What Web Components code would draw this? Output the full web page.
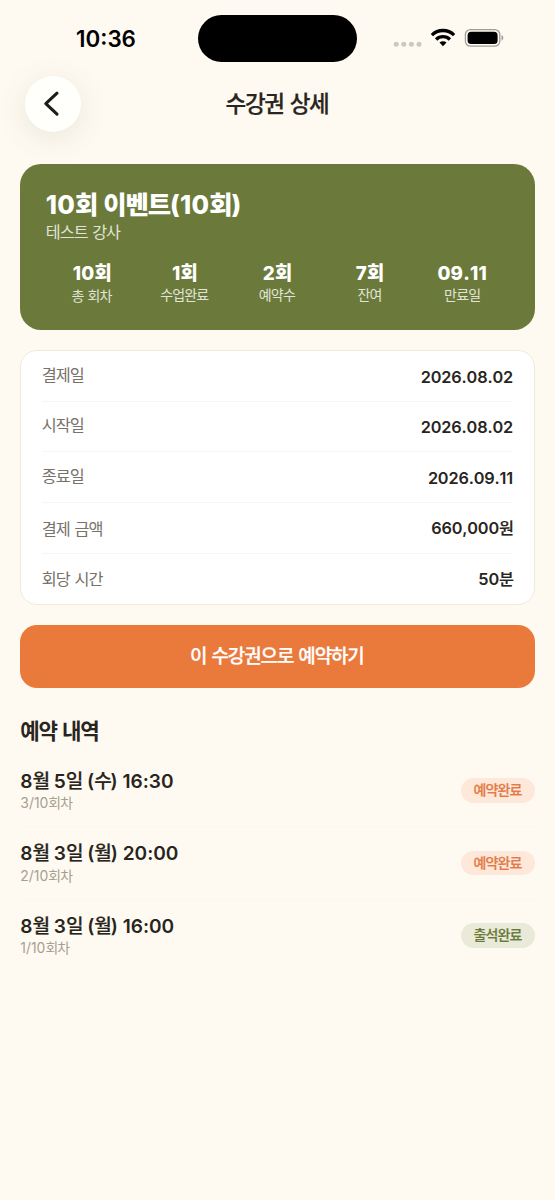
<!DOCTYPE html>
<html lang="ko">
<head>
<meta charset="utf-8">
<title>수강권 상세</title>
<style>
html,body{margin:0;background:#fffaf1}
body{width:555px;height:1200px;overflow:hidden;font-family:Inter,"Noto Sans CJK KR",sans-serif;color:#282520}
</style>
</head>
<body>
<pass-screen></pass-screen>
<script>
// Hangul runs are set slightly tighter than digits and punctuation.
const ko = s => s.replace(/[가-힣]+/g, m => `<span class="h">${m}</span>`);
const BASE = `:host{display:block;box-sizing:border-box}*{box-sizing:border-box}.h{letter-spacing:-.06em}`;
const define = (name, css, html) => customElements.define(name, class extends HTMLElement {
  constructor() { super(); this.attachShadow({mode: 'open'}); }
  connectedCallback() {
    const t = document.createElement('template');
    t.innerHTML = `<style>${BASE}${css}</style>` + html(k => this.getAttribute(k) || '');
    this.shadowRoot.replaceChildren(t.content.cloneNode(true));
  }
});

define('status-bar', `
:host{display:grid;grid-template-columns:198px 159px 1fr;height:75.5px;color:#000}
.time{padding:24px 0 0 76px;font-size:22.4px;line-height:30px;font-weight:600;white-space:nowrap}
.island{margin-top:15px;height:46.5px;border-radius:24px;background:#000}
.icons{display:flex;padding:27px 0 0 36px}
svg{display:block}`,
() => `<div class="time">10:36</div><div class="island"></div>
<div class="icons"><svg width="114" height="24" viewBox="0 0 114 24">
<g fill="#cbc8c0"><circle cx="3.2" cy="17.3" r="2.5"/><circle cx="10.8" cy="17.3" r="2.5"/><circle cx="18.4" cy="17.3" r="2.5"/><circle cx="26" cy="17.3" r="2.5"/></g>
<g fill="none" stroke="#000" stroke-width="3.3"><path d="M38.9 8.1a15.7 15.7 0 0 1 22.2 0"/><path d="M43.1 12.5a9.8 9.8 0 0 1 13.8 0"/></g>
<path d="M46.5 15.6a5.1 5.1 0 0 1 7 0L50 19.2z" fill="#000"/>
<rect x="72.4" y="2.6" width="34.4" height="16.6" rx="5" fill="none" stroke="#a09d97" stroke-width="1.3"/>
<rect x="74.6" y="4.8" width="30" height="12.3" rx="3.6" fill="#000"/>
<path d="M108.5 8.1c2.4 1 2.4 4.6 0 5.6z" fill="#a09d97"/></svg></div>`);

define('nav-header', `
:host{display:grid;grid-template-columns:56px 1fr 56px;align-items:center;padding:0 25.5px 0 24.5px;height:56px}
.back{width:56px;height:56px;border-radius:50%;background:#fffffc;box-shadow:0 6px 30px rgba(90,90,70,.12);display:grid;place-items:center}
h1{margin:0;text-align:center;font-size:22.5px;line-height:30px;font-weight:500;-webkit-text-stroke:.25px currentColor}`,
g => `<div class="back"><svg width="56" height="56" viewBox="0 0 56 56"><path d="M32 17.2 20.8 27.7 32 38.2" fill="none" stroke="#1d1c1a" stroke-width="3.1" stroke-linecap="round" stroke-linejoin="round"/></svg></div><h1>${ko(g('title'))}</h1>`);

define('pass-stat', `
:host{text-align:center;color:#fff;white-space:nowrap;position:relative;left:-.5px}
b{display:block;font-size:18.8px;line-height:24px;font-weight:800;font-kerning:none;letter-spacing:.01em}
i{display:block;font-style:normal;font-size:14px;line-height:20px;margin-top:-1px;color:#e1e4d8;padding-top:var(--label-top,0)}`,
g => `<b>${ko(g('value'))}</b><i>${ko(g('label'))}</i>`);

define('pass-card', `
:host{height:166px;border-radius:21px;background:#6b7a3a;padding:25px 25.5px 0;color:#fff}
h2{margin:0;font-size:25.4px;line-height:32px;font-weight:800;letter-spacing:.01em}
h2 .h{letter-spacing:-.043em}
p{margin:0;font-size:16.2px;line-height:23px;color:#e1e4d8}
.stats{display:grid;grid-template-columns:repeat(5,1fr);margin-top:18.2px}`,
g => `<h2>${ko(g('name'))}</h2><p>${ko(g('teacher'))}</p><div class="stats"><slot></slot></div>`);

define('info-card', `
:host{height:254.5px;border:1.5px solid #ecebdc;border-radius:17px;background:#fff;padding:0 20.5px}`,
() => `<slot></slot>`);

define('info-row', `
:host{display:flex;justify-content:space-between;height:50.6px;border-bottom:1px solid #f6f6f3;font-size:16.3px;line-height:24px}
:host(:last-child){border:0}
.l{color:#77726a;padding-top:var(--label-top,12px)}
.v{font-weight:600;padding-top:13.4px;font-kerning:none;letter-spacing:-.01em}
.v .h{font-weight:500;-webkit-text-stroke:.2px currentColor}`,
g => `<span class="l">${ko(g('label'))}</span><span class="v">${ko(g('value'))}</span>`);

define('primary-button', `
:host{height:63px}
button{display:block;width:100%;height:63px;border:0;border-radius:17px;background:#ea7a3c;color:#fff;font:500 19px/28px Inter,"Noto Sans CJK KR",sans-serif;-webkit-text-stroke:.25px currentColor;padding:1.5px 1px 0 0}`,
g => `<button>${ko(g('label'))}</button>`);

define('status-badge', `
:host{width:74px;height:24.5px;border-radius:13px;text-align:center;font-size:14px;line-height:24px;font-weight:500;-webkit-text-stroke:.2px currentColor;color:#e37a45;background:#fde8da}
:host([kind=done]){color:#6b7a3a;background:#e9ead8}`,
g => ko(g('label')));

define('booking-row', `
:host{display:flex;align-items:center;justify-content:space-between;height:72.67px;border-bottom:1px solid #fcf7ec}
:host(:last-child){border-color:transparent}
.d{font-size:19.1px;line-height:25px;font-weight:600;position:relative;top:1px}
.d .h{font-weight:500;-webkit-text-stroke:.2px currentColor}
.s{font-size:13.9px;line-height:20px;color:#a5a092;padding-top:.2px}`,
g => `<div><div class="d">${ko(g('date'))}</div><div class="s">${ko(g('count'))}</div></div><slot></slot>`);

define('pass-screen', `
:host{height:1200px}
main{display:flex;flex-direction:column;padding:32.5px 20.5px 0 20.3px}
info-card{margin-top:20.3px}
primary-button{margin-top:20px}
h3{margin:29px 0 9.8px;font-size:21.2px;line-height:28px;font-weight:600}`,
() => `<status-bar></status-bar><nav-header title="수강권 상세"></nav-header>
<main>
<pass-card name="10회 이벤트(10회)" teacher="테스트 강사">
<pass-stat style="--label-top:1px" value="10회" label="총 회차"></pass-stat><pass-stat value="1회" label="수업완료"></pass-stat><pass-stat value="2회" label="예약수"></pass-stat><pass-stat value="7회" label="잔여"></pass-stat><pass-stat value="09.11" label="만료일"></pass-stat>
</pass-card>
<info-card>
<info-row label="결제일" value="2026.08.02"></info-row><info-row style="--label-top:11.5px" label="시작일" value="2026.08.02"></info-row><info-row label="종료일" value="2026.09.11"></info-row><info-row style="--label-top:13.5px" label="결제 금액" value="660,000원"></info-row><info-row style="--label-top:13px" label="회당 시간" value="50분"></info-row>
</info-card>
<primary-button label="이 수강권으로 예약하기"></primary-button>
<h3>${ko('예약 내역')}</h3>
<section>
<booking-row date="8월 5일 (수) 16:30" count="3/10회차"><status-badge label="예약완료"></status-badge></booking-row>
<booking-row date="8월 3일 (월) 20:00" count="2/10회차"><status-badge label="예약완료"></status-badge></booking-row>
<booking-row date="8월 3일 (월) 16:00" count="1/10회차"><status-badge kind="done" label="출석완료"></status-badge></booking-row>
</section>
</main>`);
</script>
</body>
</html>
